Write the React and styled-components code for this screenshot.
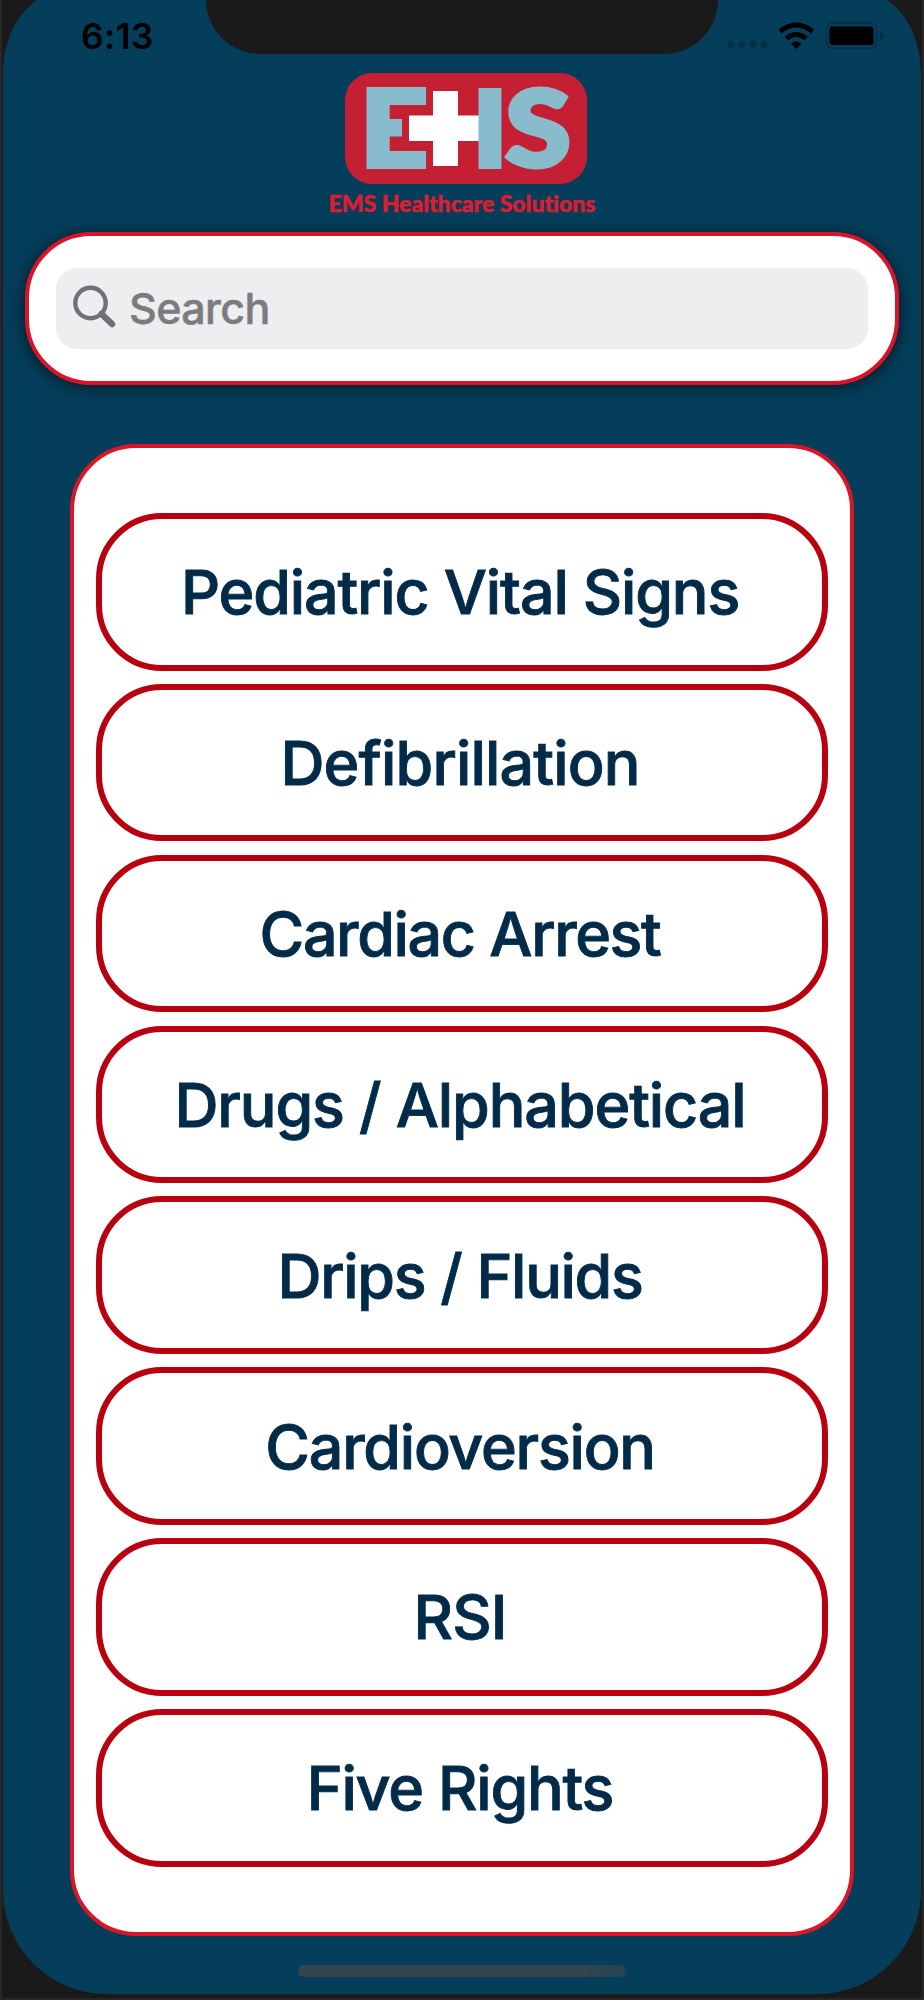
import React from 'react';
import styled, { createGlobalStyle } from 'styled-components';

const GlobalStyle = createGlobalStyle`
  * {
    box-sizing: border-box;
  }
  body {
    margin: 0;
    background: #1b1a1a;
    font-family: Inter, 'Liberation Sans', sans-serif;
  }
`;

const Device = styled.div`
  width: 924px;
  height: 2000px;
  overflow: hidden;
  background: #1b1a1a;
  border: solid #2a2625;
  border-width: 0 2px 2px;
  padding: 0 1px 4px;
`;

const Screen = styled.main`
  position: relative;
  height: 1994px;
  background: #043e5a;
  border-radius: 0 0 104px 104px;
  box-shadow: inset 0 0 2px #04486a;
  display: flex;
  flex-direction: column;
  align-items: center;
`;

const Corner = styled.svg`
  position: absolute;
  top: 0;
  ${({ $side }) => $side}: 0;
  ${({ $side }) => ($side === 'right' ? 'transform: scaleX(-1);' : '')}
`;

const Notch = styled.div`
  width: 512px;
  height: 54px;
  background: #1b1a1a;
  border-radius: 0 0 55px 55px / 0 0 54px 54px;
`;

const StatusBar = styled.header`
  width: 100%;
  height: 54px;
  display: grid;
  grid-template-columns: 203px 512px 203px;
`;

const Clock = styled.time`
  padding: 15px 0 0 78px;
  font-size: 35.5px;
  line-height: 44px;
  font-weight: 600;
  letter-spacing: 0.2px;
  color: #000;
`;

const Indicators = styled.svg`
  display: block;
`;

const Logo = styled.svg`
  display: block;
  font-variant-ligatures: none;
`;

const SearchCard = styled.section`
  width: 874px;
  height: 153px;
  margin-top: 12px;
  padding: 32px 27px;
  background: #fff;
  border: 4px solid #d9142a;
  border-radius: 66px;
  box-shadow: 0 2px 16px rgba(0, 0, 0, 0.65);
`;

const SearchField = styled.div`
  height: 81px;
  display: flex;
  align-items: center;
  padding: 0 0 2px 15px;
  background: #eeeef0;
  border-radius: 21px;
  color: #7b7b80;
  font-size: 43px;
  font-weight: 500;
  letter-spacing: -0.6px;
  -webkit-text-stroke: 0.5px #7b7b80;
  svg {
    margin: 1px 12px 0 0;
  }
`;

const MenuPanel = styled.nav`
  width: 784px;
  height: 1492px;
  margin-top: 59px;
  padding: 65px 22px;
  background: #fff;
  border: 4px solid #da1528;
  border-radius: 66px;
  display: flex;
  flex-direction: column;
  gap: 13.36px;
`;

const MenuButton = styled.button`
  height: 157.5px;
  flex: none;
  padding: 1px 4px 0 0;
  background: #fff;
  border: 6px solid #b8000f;
  border-radius: 66px;
  font-family: inherit;
  font-size: 61px;
  font-weight: 500;
  letter-spacing: ${({ $tracking }) => $tracking}px;
  color: #022b49;
  -webkit-text-stroke: 0.9px #022b49;
  white-space: nowrap;
`;

const HomeIndicator = styled.div`
  width: 328px;
  height: 12px;
  margin-top: 29px;
  border-radius: 6px;
  background: linear-gradient(90deg, #35454d 85%, #254353);
`;

const menu = [
  { label: 'Pediatric Vital Signs', tracking: -1.15 },
  { label: 'Defibrillation', tracking: -0.85 },
  { label: 'Cardiac Arrest', tracking: -1.4 },
  { label: 'Drugs / Alphabetical', tracking: -1.1 },
  { label: 'Drips / Fluids', tracking: -1.3 },
  { label: 'Cardioversion', tracking: -1.25 },
  { label: 'RSI', tracking: -0.8 },
  { label: 'Five Rights', tracking: -1.2 },
];

function ScreenCorner({ side }) {
  return (
    <Corner $side={side} width="34" height="76" viewBox="0 0 34 76">
      <path d="M0 0H34C12 16 0 42 0 76Z" fill="#1b1a1a" />
    </Corner>
  );
}

function StatusIcons() {
  return (
    <Indicators width="203" height="54" viewBox="718 0 203 54">
      <g fill="#000" fillOpacity="0.22">
        <circle cx="731" cy="44.5" r="3.7" />
        <circle cx="742" cy="44.5" r="3.7" />
        <circle cx="753" cy="44.5" r="3.7" />
        <circle cx="764" cy="44.5" r="3.7" />
      </g>
      <g fill="none" stroke="#000" strokeWidth="5">
        <path d="M780 31.5Q796.3 18.5 812.5 31.5" />
        <path d="M786.5 38.5Q796.3 30.5 806 38.5" />
      </g>
      <path d="M791 43.5Q796.3 39.5 801.5 43.5L796.3 49Z" fill="#000" />
      <rect x="826.5" y="23" width="50" height="25.5" rx="6" fill="none" stroke="#03324a" strokeWidth="2" />
      <rect x="829.5" y="26.5" width="44" height="18.5" rx="3" fill="#000" />
      <path d="M880 31.5Q884 33 884 35.7Q884 38.5 880 40Z" fill="#032c42" />
    </Indicators>
  );
}

function EhsLogo() {
  return (
    <Logo width="284" height="166" viewBox="320 54 284 166" fontFamily="Lato, sans-serif">
      <rect x="345" y="73" width="242" height="111" rx="27" fill="#c41f32" />
      <g fill="#88bccd" fontWeight="900">
        <text x="361" y="169" fontFamily="Inter, sans-serif" fontSize="113" textLength="72" lengthAdjust="spacingAndGlyphs">
          E
        </text>
        <text
          x="505.5"
          y="165.5"
          fontSize="104"
          stroke="#88bccd"
          strokeWidth="5"
          textLength="65"
          lengthAdjust="spacingAndGlyphs"
        >
          S
        </text>
      </g>
      <path
        d="M433 91H458V115.5H479V141H458V166H433V141H409V115.5H433Z"
        fill="#fff"
        stroke="#c41f32"
        strokeWidth="14"
        paintOrder="stroke"
      />
      <rect x="478.5" y="88" width="23" height="81" fill="#88bccd" />
      <text
        x="328.5"
        y="212"
        fontSize="23"
        fontWeight="900"
        fill="#dc1c30"
        stroke="#dc1c30"
        strokeWidth="0.5"
        textLength="267"
      >
        EMS Healthcare Solutions
      </text>
    </Logo>
  );
}

function App() {
  return (
    <>
      <GlobalStyle />
      <Device>
        <Screen>
          <ScreenCorner side="left" />
          <ScreenCorner side="right" />
          <StatusBar>
            <Clock>6:13</Clock>
            <Notch />
            <StatusIcons />
          </StatusBar>
          <EhsLogo />
          <SearchCard>
            <SearchField>
              <svg width="46" height="46" viewBox="0 0 46 46" fill="none" stroke="#707076">
                <circle cx="19.5" cy="18" r="15.2" strokeWidth="4.4" />
                <path d="M30.5 29L41 39" strokeWidth="6.5" strokeLinecap="round" />
              </svg>
              Search
            </SearchField>
          </SearchCard>
          <MenuPanel>
            {menu.map(({ label, tracking }) => (
              <MenuButton key={label} type="button" $tracking={tracking}>
                {label}
              </MenuButton>
            ))}
          </MenuPanel>
          <HomeIndicator />
        </Screen>
      </Device>
    </>
  );
}

export default App;
